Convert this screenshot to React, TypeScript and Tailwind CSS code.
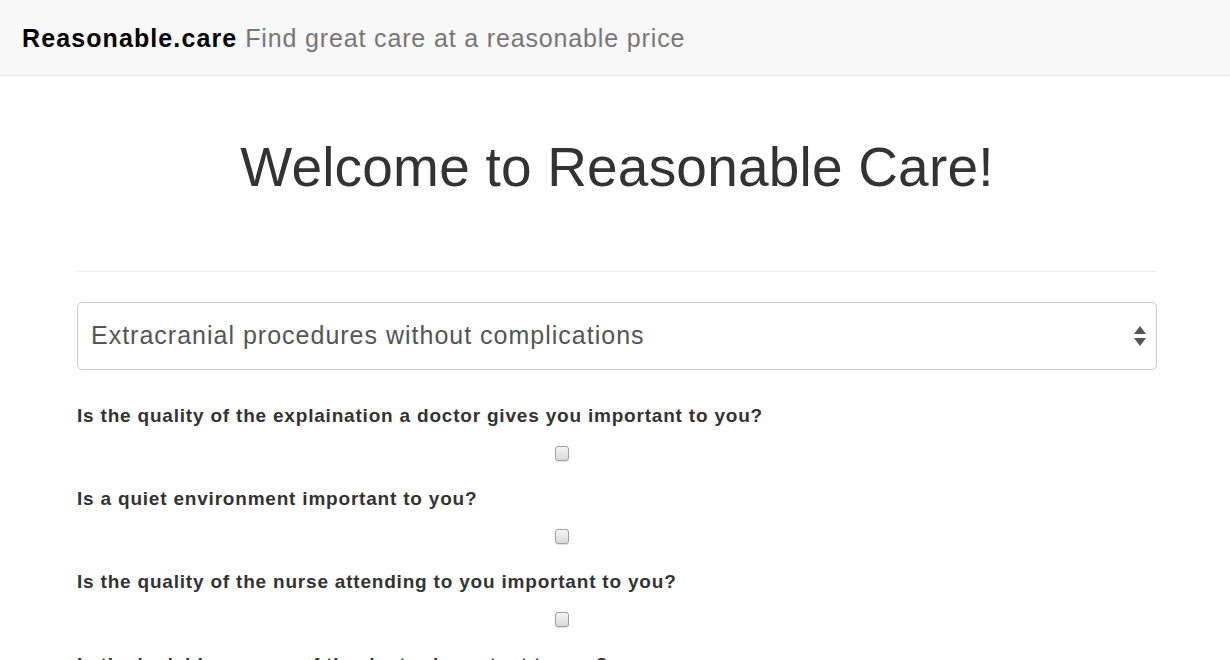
import React from "react";

const questions = [
  "Is the quality of the explaination a doctor gives you important to you?",
  "Is a quiet environment important to you?",
  "Is the quality of the nurse attending to you important to you?",
  "Is the bedside manner of the doctor important to you?",
];

function Box() {
  return (
    <div className="w-[14px] h-[15px] rounded-[3px] border border-[#a0a0a0] bg-gradient-to-b from-[#f4f4f4] to-[#dadada] shadow-[0_1px_1px_rgba(0,0,0,0.12)]" />
  );
}

export default function App() {
  return (
    <div className="bg-white font-['Liberation_Sans',Arial,sans-serif] text-[#333] overflow-hidden h-[660px]">
      <nav className="h-[76px] bg-[#f8f8f8] border-b border-[#e7e7e7] flex items-center px-[22px] pt-[3px]">
        <span className="text-[25px] font-bold text-black tracking-[1.1px]">Reasonable.care</span>
        <span className="text-[25px] text-[#777] ml-[8px] tracking-[0.85px]">Find great care at a reasonable price</span>
      </nav>
      <div className="w-[1080px] ml-[77px]">
        <h1 className="text-center text-[55px] leading-none pt-[64px] pb-[76px] text-[#333] tracking-[0.2px]">Welcome to Reasonable Care!</h1>
        <div className="border-t border-[#eee]" />
        <div className="mt-[30px] h-[68px] rounded-[5px] border border-[#ccc] flex items-center justify-between pl-[13px] pr-[9px]">
          <span className="text-[25px] text-[#555] tracking-[1px]">Extracranial procedures without complications</span>
          <svg width="14" height="24" viewBox="0 0 14 24">
            <path d="M7 2 L13 10 L1 10 Z" fill="#555" />
            <path d="M1 14 L13 14 L7 22 Z" fill="#555" />
          </svg>
        </div>
        <div className="mt-[35px]">
          {questions.map((q) => (
            <div key={q} className="h-[83px]">
              <div className="text-[19px] font-bold leading-[22px] text-[#333] tracking-[0.8px]">{q}</div>
              <div className="mt-[19px] pl-[478px]">
                <Box />
              </div>
            </div>
          ))}
        </div>
      </div>
    </div>
  );
}
